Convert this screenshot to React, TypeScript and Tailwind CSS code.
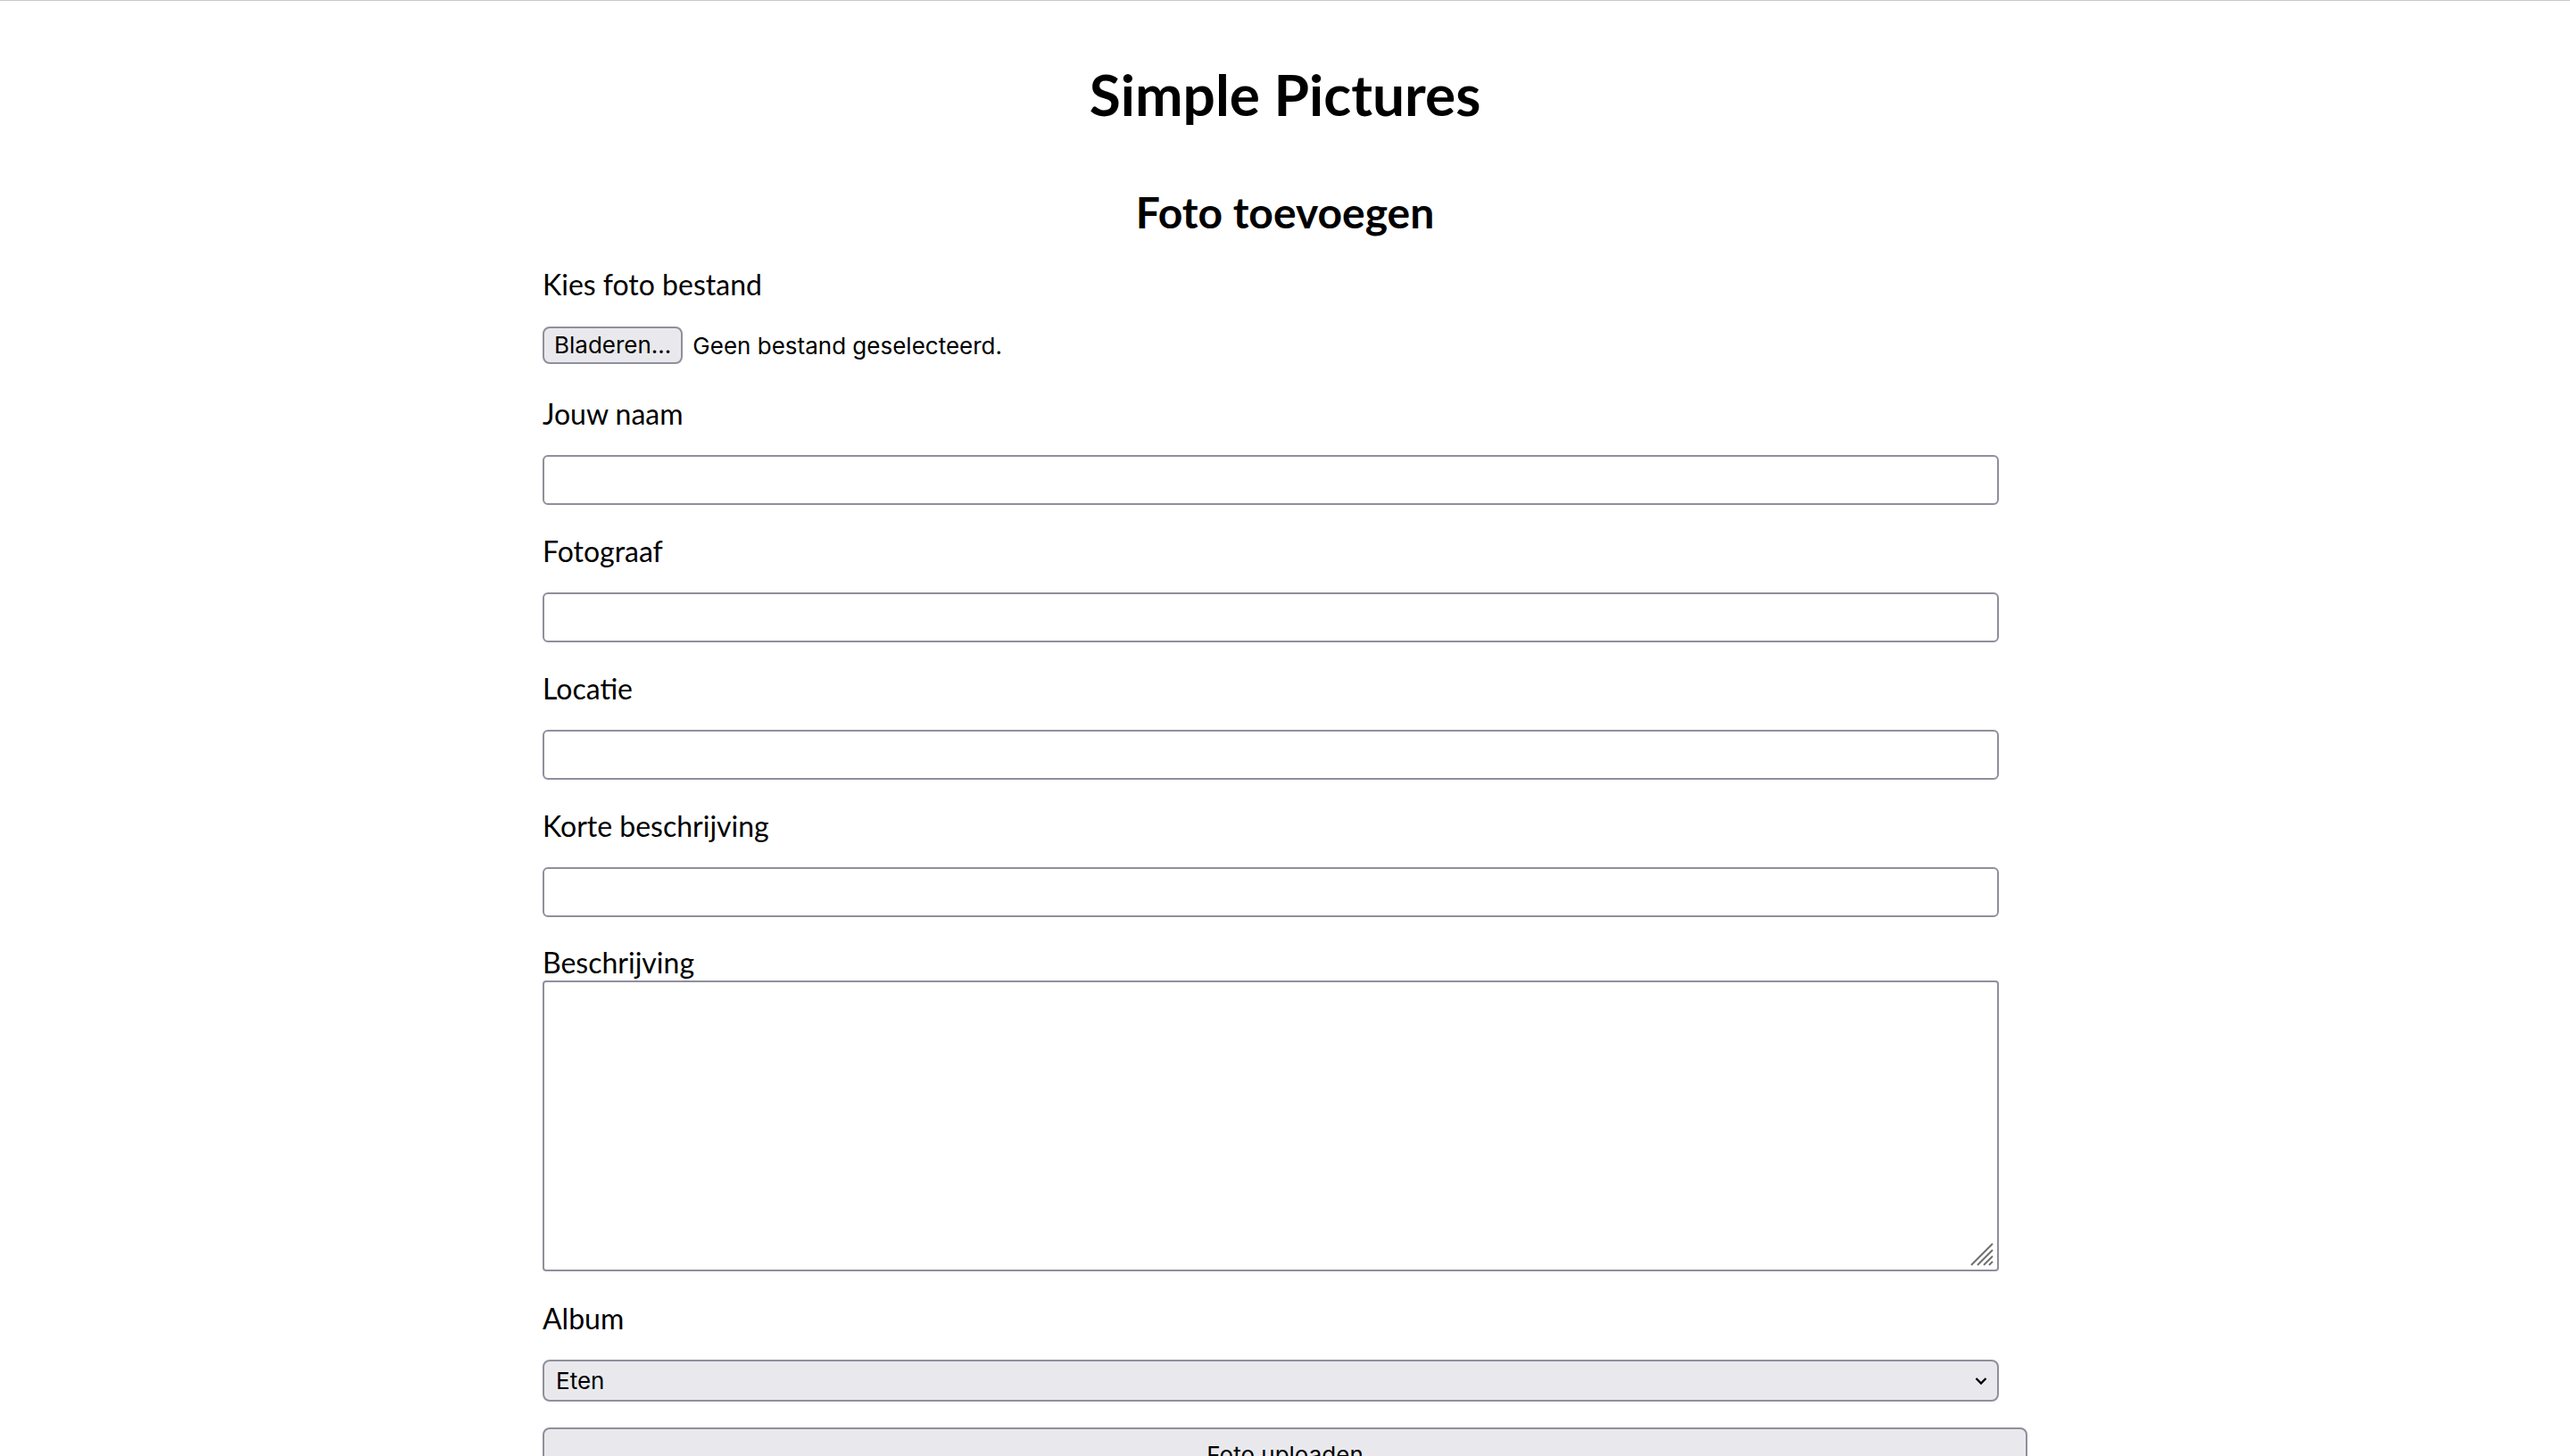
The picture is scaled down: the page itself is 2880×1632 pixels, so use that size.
import React from 'react';

const fields = ['Jouw naam', 'Fotograaf', 'Locatie', 'Korte beschrijving'];

function TextField({ label }: { label: string }) {
  return (
    <div className="mt-[33px] flex flex-col">
      <label className="block text-[32px] leading-[38px]">{label}</label>
      <input
        type="text"
        className="mt-[27px] w-[1632px] h-[56px] border-2 border-[#8f8f9d] rounded-[6px] bg-white px-3 outline-none"
      />
    </div>
  );
}

export default function App() {
  return (
    <div className="min-h-screen bg-white border-t border-[#c8c8c8] text-black font-['Lato','Noto_Sans',sans-serif]">
      <h1 className="mt-[66px] text-center text-[64px] font-bold leading-[77px]">Simple Pictures</h1>
      <h2 className="mt-[65px] text-center text-[48px] font-bold leading-[58px]">Foto toevoegen</h2>

      <form className="w-[1664px] mx-auto flex flex-col" onSubmit={(e) => e.preventDefault()}>
        {/* Bestand kiezen */}
        <label className="mt-[33px] block text-[32px] leading-[38px]">Kies foto bestand</label>
        <div className="mt-[28px] flex items-center gap-[11px] font-['Inter',sans-serif] text-[26px]">
          <button
            type="button"
            className="h-[42px] px-[11px] border-2 border-[#8f8f9d] rounded-[8px] bg-[#e9e9ed] leading-none"
          >
            Bladeren...
          </button>
          <span>Geen bestand geselecteerd.</span>
        </div>

        <div className="mt-[4px]">
          {fields.map((f) => (
            <TextField key={f} label={f} />
          ))}
        </div>

        {/* Beschrijving */}
        <label className="mt-[32px] block text-[32px] leading-[38px]">Beschrijving</label>
        <div className="relative mt-[1px] w-[1632px] h-[326px]">
          <textarea className="w-full h-full border-2 border-[#8f8f9d] rounded-[4px] bg-white resize-none outline-none p-2" />
          <svg className="absolute right-[6px] bottom-[6px]" width="26" height="26" viewBox="0 0 26 26">
            <path d="M1 25 L25 1 M8 25 L25 8 M15 25 L25 15 M21 25 L25 21" stroke="#707070" strokeWidth="2" fill="none" />
          </svg>
        </div>

        {/* Album */}
        <label className="mt-[34px] block text-[32px] leading-[38px]">Album</label>
        <div className="relative mt-[27px] w-[1632px] h-[47px]">
          <select className="appearance-none w-full h-full border-2 border-[#8f8f9d] rounded-[8px] bg-[#e9e9ed] pl-[13px] font-['Inter',sans-serif] text-[26px] outline-none">
            <option>Eten</option>
            <option>Natuur</option>
            <option>Reizen</option>
          </select>
          <svg className="absolute right-[13px] top-1/2 -translate-y-1/2 pointer-events-none" width="14" height="9" viewBox="0 0 14 9">
            <path d="M1.5 1.5 L7 7 L12.5 1.5" stroke="#000" strokeWidth="2.4" fill="none" />
          </svg>
        </div>

        <button
          type="submit"
          className="mt-[29px] w-full h-[62px] border-2 border-[#8f8f9d] rounded-[8px] bg-[#e9e9ed] font-['Inter',sans-serif] text-[26px] leading-[30px] pt-[13px] pb-[13px]"
        >
          Foto uploaden
        </button>
        <div className="h-[40px]" />
      </form>
    </div>
  );
}
